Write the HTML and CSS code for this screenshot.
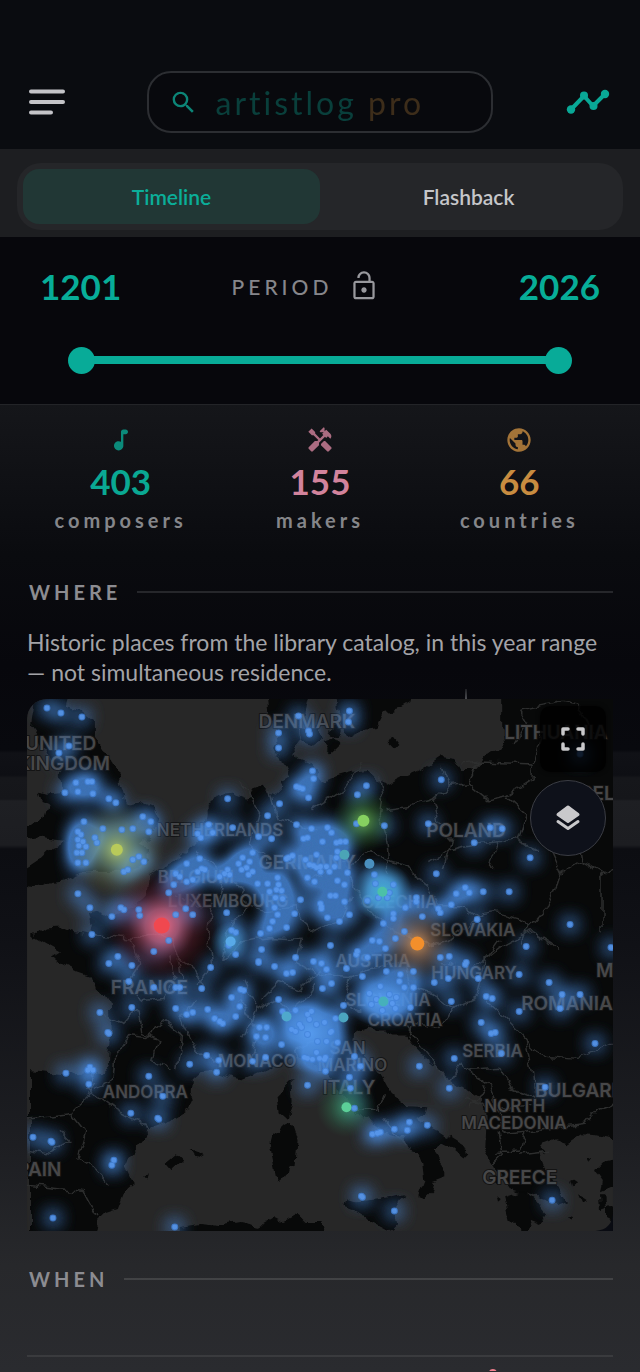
FILE: index.html
```html
<!doctype html>
<html lang="en">
    <head>
        <meta charset="utf-8">
        <meta name="viewport" content="width=device-width, initial-scale=1">
        <title>artistlog pro</title>
        <link rel="stylesheet" href="styles.css">
    </head>
    <body>
        <header class="topbar">
            <button class="icon_button" type="button" aria-label="Menu">
                <svg width="36" height="26" viewBox="0 0 36 26"><path d="M2 2.500h32M2 13h32M2 23.500h20" fill="none" stroke="currentColor" stroke-width="4" stroke-linecap="round"/></svg>
            </button>
            <label class="search">
                <svg width="29" height="29" viewBox="0 0 24 24" fill="currentColor"><path d="M15.500 14h-.79l-.28-.27A6.470 6.470 0 0 0 16 9.500 6.500 6.500 0 1 0 9.500 16c1.610 0 3.090-.59 4.230-1.570l.27.28v.79l5 4.990L20.490 19l-4.990-5zm-6 0C7.010 14 5 11.990 5 9.500S7.010 5 9.500 5 14 7.010 14 9.500 11.990 14 9.500 14z"/></svg>
                <input type="search" placeholder="artistlog pro" aria-label="Search">
            </label>
            <button class="icon_button trend" type="button" aria-label="Trends">
                <svg width="44" height="26" viewBox="0 0 44 26"><path d="M5 20.500L18 7l9 10L39 5" fill="none" stroke="currentColor" stroke-width="4" stroke-linejoin="round"/><g fill="currentColor"><circle cx="5" cy="20.500" r="4.200"/><circle cx="18" cy="6.500" r="4"/><circle cx="27.500" cy="17" r="4"/><circle cx="39" cy="5" r="4.200"/></g></svg>
            </button>
        </header>

        <nav class="tabs_bar">
            <div class="tabs">
                <button class="tab active" type="button">Timeline</button>
                <button class="tab" type="button">Flashback</button>
            </div>
        </nav>

        <section class="period">
            <div class="period_row">
                <output class="year">1201</output>
                <div class="period_label">
                    <span>PERIOD</span>
                    <button class="icon_button" type="button" aria-label="Lock period">
                        <svg width="32" height="32" viewBox="0 0 24 24" fill="currentColor"><path d="M12 17c1.100 0 2-.9 2-2s-.9-2-2-2-2 .9-2 2 .9 2 2 2zm6-9h-1V6c0-2.760-2.240-5-5-5S7 3.240 7 6h1.700c0-1.800 1.490-3.300 3.300-3.300s3.300 1.490 3.300 3.300v2H6c-1.100 0-2 .9-2 2v10c0 1.100.9 2 2 2h12c1.100 0 2-.9 2-2V10c0-1.100-.9-2-2-2zm.3 12.300H5.700V9.700h12.600z"/></svg>
                    </button>
                </div>
                <output class="year">2026</output>
            </div>
            <div class="range">
                <input class="track" type="range" min="1201" max="2026" value="1201" aria-label="From year">
                <input type="range" min="1201" max="2026" value="2026" aria-label="To year">
            </div>
        </section>

        <main>
            <div class="stats">
                <div class="stat composers">
                    <svg width="28" height="28" viewBox="0 0 24 24" fill="currentColor"><path d="M12 5v8.550c-.59-.34-1.270-.55-2-.55-2.210 0-4 1.790-4 4s1.790 4 4 4 4-1.790 4-4V7h2c1.100 0 2-.9 2-2s-.9-2-2-2h-2c-1.100 0-2 .9-2 2z"/></svg>
                    <strong>403</strong>
                    <span>composers</span>
                </div>
                <div class="stat makers">
                    <svg width="28" height="28" viewBox="0 0 24 24" fill="currentColor"><path d="M21.670 18.170l-5.300-5.300h-.99l-2.540 2.540v.99l5.300 5.300c.39.39 1.020.39 1.410 0l2.120-2.120c.39-.38.39-1.020 0-1.410z"/><path d="M17.340 10.190l1.410-1.410 2.120 2.120c1.170-1.170 1.170-3.070 0-4.240l-3.540-3.540-1.410 1.410V1.710L15.220 1l-3.540 3.540.71.71h2.830l-1.410 1.410 1.060 1.060-2.890 2.890-4.130-4.130V5.060L4.830 2.040 2 4.870 5.030 7.900h1.410l4.130 4.130-.85.85H7.600l-5.300 5.300c-.39.39-.39 1.020 0 1.410l2.120 2.120c.39.39 1.020.39 1.410 0l5.300-5.300v-2.120l5.150-5.150z"/></svg>
                    <strong>155</strong>
                    <span>makers</span>
                </div>
                <div class="stat countries">
                    <svg width="28" height="28" viewBox="0 0 24 24" fill="currentColor"><path d="M12 2C6.480 2 2 6.480 2 12s4.480 10 10 10 10-4.480 10-10S17.520 2 12 2zm-1 17.930c-3.950-.49-7-3.850-7-7.930 0-.62.08-1.210.21-1.790L9 15v1c0 1.100.9 2 2 2v1.930zm6.900-2.540c-.26-.81-1-1.390-1.900-1.390h-1v-3c0-.55-.45-1-1-1H8v-2h2c.55 0 1-.45 1-1V7h2c1.100 0 2-.9 2-2v-.41c2.930 1.190 5 4.060 5 7.410 0 2.080-.8 3.970-2.100 5.390z"/></svg>
                    <strong>66</strong>
                    <span>countries</span>
                </div>
            </div>

            <section class="block">
                <h2>WHERE</h2>
                <p>Historic places from the library catalog, in this year range — not simultaneous residence.</p>
                <div class="map">
                    <svg class="map_canvas" viewBox="27 699 587 533" role="img" aria-label="Map of historic places in Europe">
                        <defs>
                            <filter id="coast" filterUnits="userSpaceOnUse" x="17" y="689" width="607" height="553" color-interpolation-filters="sRGB">
                                <feTurbulence type="fractalNoise" baseFrequency=".08" numOctaves="2" seed="4"/>
                                <feDisplacementMap in="SourceGraphic" scale="11" xChannelSelector="R" yChannelSelector="G"/>
                            </filter>
                            <filter id="heat" filterUnits="userSpaceOnUse" x="17" y="689" width="607" height="553" color-interpolation-filters="sRGB">
                                <feGaussianBlur stdDeviation="9"/>
                                <feComponentTransfer><feFuncA type="linear" slope="4.400"/></feComponentTransfer>
                            </filter>
                            <radialGradient id="g_red"><stop offset="0" stop-color="#ff6f8c" stop-opacity=".95"/><stop offset=".3" stop-color="#c4607f" stop-opacity=".75"/><stop offset=".6" stop-color="#6a2434" stop-opacity=".45"/><stop offset="1" stop-color="#5a0d14" stop-opacity="0"/></radialGradient>
                            <radialGradient id="g_yellow"><stop offset="0" stop-color="#a9c77a" stop-opacity=".95"/><stop offset=".4" stop-color="#7c9c80" stop-opacity=".6"/><stop offset="1" stop-color="#5b5a30" stop-opacity="0"/></radialGradient>
                            <radialGradient id="g_lime"><stop offset="0" stop-color="#6db84c" stop-opacity=".8"/><stop offset=".5" stop-color="#3f7f35" stop-opacity=".4"/><stop offset="1" stop-color="#2d6030" stop-opacity="0"/></radialGradient>
                            <radialGradient id="g_orange"><stop offset="0" stop-color="#e8a468" stop-opacity=".85"/><stop offset=".4" stop-color="#a07a62" stop-opacity=".55"/><stop offset="1" stop-color="#5a4028" stop-opacity="0"/></radialGradient>
                            <radialGradient id="g_teal"><stop offset="0" stop-color="#44b2d0" stop-opacity=".95"/><stop offset=".5" stop-color="#4aa6dc" stop-opacity=".6"/><stop offset="1" stop-color="#3b86b8" stop-opacity="0"/></radialGradient>
                            <radialGradient id="g_green"><stop offset="0" stop-color="#3a9a6c" stop-opacity=".8"/><stop offset="1" stop-color="#286044" stop-opacity="0"/></radialGradient>
                            <radialGradient id="g_blue"><stop offset="0" stop-color="#5ba3fa" stop-opacity=".85"/><stop offset=".5" stop-color="#5299f0" stop-opacity=".55"/><stop offset="1" stop-color="#3a78c8" stop-opacity="0"/></radialGradient>
                            <!-- catalog places, one zero-length stroke each -->
                            <path id="places" d="M47 708h0M61 713h0M82 717h0M69 746h0M59 753h0M76 783h0M88 782h0M92 782h0M65 793h0M78 792h0M93 794h0M109 799h0M116 803h0M143 817h0M151 822h0M149 832h0M84 822h0M78 832h0M103 829h0M122 830h0M133 829h0M78 840h0M83 842h0M81 835h0M95 838h0M97 843h0M79 846h0M86 847h0M77 853h0M82 853h0M78 863h0M86 863h0M139 857h0M144 862h0M133 860h0M124 872h0M128 870h0M78 894h0M90 908h0M112 917h0M121 908h0M124 910h0M139 910h0M140 916h0M92 935h0M109 964h0M118 957h0M132 966h0M154 952h0M169 941h0M169 893h0M176 915h0M186 909h0M193 915h0
                                M187 864h0M200 859h0M202 869h0M176 874h0M180 877h0M187 882h0M198 872h0M205 870h0M193 880h0M174 885h0M228 799h0M209 825h0M213 833h0M198 834h0M201 838h0M233 828h0M259 837h0M272 839h0M268 816h0M280 804h0M309 798h0M297 787h0M303 789h0M300 788h0M313 771h0M314 779h0M299 716h0M279 733h0M279 748h0M309 731h0M310 734h0M297 825h0M312 829h0M304 839h0M308 838h0M253 853h0M243 858h0M250 862h0M247 868h0M253 872h0M242 870h0M239 864h0M249 875h0M225 874h0M230 875h0M220 877h0M228 870h0M258 884h0M287 859h0M293 856h0M289 858h0M301 900h0M295 914h0M287 928h0M261 934h0M227 913h0M232 931h0M236 933h0M236 955h0M229 946h0M262 950h0M296 958h0M259 962h0M275 967h0M211 968h0
                                M278 878h0M270 892h0M277 890h0M282 891h0M276 898h0M275 908h0M278 915h0M273 922h0M270 929h0M283 899h0M268 884h0M279 885h0M350 711h0M349 722h0M442 780h0M367 786h0M358 795h0M385 826h0M357 824h0M429 824h0M491 828h0M503 829h0M475 843h0M531 858h0M437 874h0M466 888h0M470 893h0M457 894h0M484 892h0M510 892h0M452 905h0M439 909h0M441 913h0M417 898h0M417 902h0M406 908h0M423 917h0M394 914h0M394 919h0M384 924h0M478 920h0M571 925h0M527 947h0M612 948h0M581 754h0M328 828h0M332 833h0M323 842h0M337 843h0M341 842h0M346 842h0M348 873h0M345 885h0M338 881h0M345 902h0M331 896h0M336 896h0M322 907h0M328 918h0M340 922h0M350 915h0M368 901h0M331 946h0M358 952h0M357 955h0M368 958h0M373 941h0M380 942h0M386 949h0M396 939h0M405 932h0M441 958h0M450 957h0M467 963h0M466 965h0
                                M317 855h0M310 865h0M317 868h0M314 866h0M321 867h0M327 867h0M335 867h0M308 878h0M315 882h0M306 860h0M338 852h0M337 858h0M321 872h0M330 872h0M321 904h0M322 909h0M376 884h0M379 898h0M390 893h0M394 885h0M375 875h0M388 898h0M129 982h0M154 988h0M176 988h0M180 988h0M202 989h0M132 1008h0M100 1013h0M109 1034h0M108 1033h0M176 1009h0M187 1015h0M193 1013h0M208 1010h0M215 1019h0M220 1022h0M223 1024h0M232 998h0M241 990h0M244 991h0M240 1007h0M236 1017h0M259 963h0M287 974h0M293 973h0M279 1000h0M314 962h0M282 1045h0M257 1037h0M260 1028h0M266 1038h0M267 1028h0M266 1058h0M253 1062h0M207 1056h0M190 1065h0M219 1061h0M217 1073h0M149 1077h0M89 1085h0M66 1074h0M90 1068h0M93 1071h0M88 1071h0M163 1097h0M131 1114h0M159 1120h0M158 1119h0M33 1138h0M52 1143h0M51 1142h0M114 1161h0M112 1166h0M53 1219h0M175 1228h0M308 1086h0
                                M283 1012h0M296 1011h0M308 1015h0M312 1012h0M300 1025h0M292 1030h0M296 1032h0M317 1025h0M325 1023h0M331 1033h0M308 1035h0M302 1028h0M310 1020h0M318 1042h0M327 1042h0M338 1043h0M317 1053h0M308 1059h0M313 1060h0M320 1059h0M326 1058h0M305 1058h0M336 1019h0M344 1006h0M323 989h0M332 984h0M347 969h0M363 977h0M327 970h0M322 964h0M314 962h0M296 958h0M387 972h0M401 975h0M414 972h0M381 987h0M400 982h0M405 988h0M414 988h0M411 1008h0M396 1009h0M397 998h0M377 1000h0M372 1005h0M383 1011h0M390 995h0M370 994h0M393 1004h0M355 1057h0M361 1067h0M420 1067h0M435 983h0M449 979h0M452 1002h0M479 979h0M487 997h0M493 999h0M520 975h0M550 983h0M563 995h0M581 995h0M561 1009h0M520 1012h0M596 1044h0M482 1023h0M492 1034h0M496 1033h0M455 1059h0M502 1054h0M450 1089h0M546 1088h0M350 1078h0M351 1089h0M355 1109h0M410 1123h0M428 1126h0M408 1131h0M395 1130h0M381 1133h0M378 1134h0M373 1135h0M363 1198h0M362 1197h0M395 1212h0M553 1201h0M326 1072h0M332 1032h0M325 1060h0"/>
                        </defs>
                        <rect class="sea" x="27" y="699" width="587" height="533"/>
                        <g filter="url(#coast)">
                            <g class="land">
                                <!-- great britain -->
                                <path d="M36 690l34 5-3 12 14 5 12 10 0 15 8 9 8 12 9 12 2 12 4 14 2 9 12-2 14 6 5 11-6 16-10 9 8 4 1 11-10 8-16 4-27 0-15 1-8 3-10 5-12 1-9 4-10-3-8 6 0-20 18-12 8-8 10-2 6-6-14-1-10-2-14 2 0-14 17-12 3-10-9-4-2-7 10 2 15-2 0-14-8-9-6-14-6-12-12-18z"/>
                                <!-- mainland -->
                                <path d="M33 937l12-8 17-1 13 5 15 2 2-10-3-12 8-2 12 6 12-5 14-7 12-11 2-19 12-7 15-8 15-11 10-12 6-22 0-12 9-4 7-4 10-1 16 6 4-11 10-4 6 7 7 3 5-5-2-8 12-4-6-13-4-10-8-3 6-12-2-15-6-10-2-25h42l-6 28-6 8 2 15-8 10 4 7 16 6 6 10 6 8 14-6 14-4 14-2 10 10 12 4 12-6 20-9 20-13 14 2 7 12 15 0 10-14 14-5 4-8-2-17 0-34h121v450l-26-6-15-1-15 10-12-4-13 5 5 9-8-2 4 15 9 11 8 14 7 10-10 5-10-7-14-5-22-6-8-12-10-13-8-15 1-20-1-18-4-12-12-8-10-6-18-14-18-14-12-13-8-10-10 0-10-5-8 0-8-4-12 4-1 13 6 12 14 10 10 15 8 15 15 12 19 1-2 7-7 5 20 10 15 10 16 10 1 6-7 0-10-8-10-5-10 9 12 16 0 10-10 4-2 10-8 8-6-2 6-16-2-17-5-13-11-4-4-10-18-5-10-8-12-7-12-13-12-15-12-12-6-10-13-10-11-1-17 8-22 9-15 6-15-3-15-5-12 1-10 9-1 12 3 8-4 8-16 10-20 7-12 15-12 15-4 10 6 13 3 5-11 9-6 16-12 4-8 8-4 22h-63v-172l33 3 25-2 15 2 6-10 2-30-1-30-4-7-11-8-4-13-12-4-16-8-10-7 8-5z"/>
                                <!-- sweden and the danish islands -->
                                <path d="M338 690h76l-3 12-12 7-14 3-8 16-14 2-14 7-8-14-4-16zM300 730l16-3 6 12-10 7-10-4zM322 742l12-4 6 8-8 7zM334 722l9 6-4 12-8-6zM388 741l4-6 6 8-4 4z"/>
                                <!-- mediterranean islands -->
                                <path d="M292 1080l1 25-5 15-9-8-2-16 8-8zM284 1126l8-4 6 18-2 25-7 3-2 8-10 4-4-20-3-18 2-8 7 2zM348 1200l12 2 20-2 24-6-9 16 3 15-7 7-15-8-20-12-10-4zM166 1163l10-8 7 7-10 9zM190 1151l8 3 3 5-8-3zM142 1179l7-5-1 6z"/>
                                <path d="M180 1228l20-3 18 2 22-4 20 4 14-8 10 5 14-8 8 8 16 0 6 20H180z"/>
                                <!-- peloponnese, aegean -->
                                <path d="M506 1198l18-6 12 8 12 15-7 11-10-4-7 14-12-14zM494 1176l6 3-2 6zM497 1196l6 5-4 3zM572 1180l6 4-4 3zM580 1196l8 5-5 2zM596 1170l8-8 12-3v28l-14 6 2-12zM600 1196l5 0 2 14-6 2zM588 1158l6 2-3 4zM608 1206l8-3v20l-8-4zM570 1216l6 1-2 4z"/>
                            </g>
                            <g class="border">
                                <path d="M379 776l4 22-2 20 6 18 2 22 0 16M389 860l-18-8-14 8-8 14 16 30 16 18 22 14M389 860l20 6 8 12 12 10 12 18 22 0 16 12M403 936l18 4 10 8 18-6 16-14 18-14 14-2 24 6 10 8M440 962l14 2 16 10 10-10 20-16 22-12 10-4 20 12 8 8M536 922l-10 10-4 10M536 922l12-14 10-22 4-12-14-30 6-20 18 10 28 4M462 764l18-2 54 2M534 764l8-30M480 762l-12 22-18 2-6-18M468 784l20 16 20-4 26-16 0-16M450 786l-16 14-20 6-28 4M434 800l8 30 10 12-8 26M508 798l20 18-8 24-20 2-24 2M500 842l-10 26M520 840l20 12M476 844l-26 6-20 14M562 874l20-12 20 12 12-6M582 862l-4-26M603 874v60"/>
                                <path d="M196 852l16 10 12 14-6 24-14 8-30-14M224 876l18 12 4 18 20 6 30-4 14 26M212 906l-4 26 4 34-16 20M310 934l30-12 12-26M246 906l-18 26-6 30M222 962l20-20 30-4 30 2M302 940l-6 22 26 14 30 2 20-10 34-6M262 1000l18-18 20 8 20-20M244 1040l14-30-14-30M258 1010l20-10 14 12 16-14 10-16M352 978l-10 24 20 10M406 962l4 26-14 18M410 988l22 6 22 16 24-12M454 1010l-12 18-28-4-6 20M408 1028l14 20 28 34M478 998l8-38 14-20M486 1000l22 20 18 18 12 18 40 4 36-16M526 1040l8 36 2 22M536 1098l-24-10-12-20-30 2M450 1082l12-18 8 8 20 14 10 24 36-2M468 1100l32 12 4 22 22-2M526 1132l60-8 12-14 16-6M500 1134l4 20-12 12M526 1132l-6 20-20 0M520 1156l30-4M486 1086l-14 24"/>
                                <path d="M92 935l44 4 20-6 16 6 6 18 18 16 12 20M130 939l10 26-14 22 18 14 20-2 10-22-4-20M100 1014l24 10 14-16 4 26 16 6-6 20 20 10M116 1054l12-18 18 2 20-18 16 14-4 34M196 1000l-14 20 14 30 20 12M116 1054l-2 28-20 8M96 1072l-8 18 26 20 38 20M27 1120l44-6 14-14 10-16M71 1114l14 18-8 26 20 12M97 1170l14 14M27 1186l56 6 14 26M60 1132l10 10-22 12-20-4M240 1000l18 30-6 32M178 960l4 20M240 780l20 34-10 30 20 20M312 810l30-20 20-28M310 880l40-20M270 790l8 30 40 10M316 1040l-20 10 6 20M350 1110l30 0 6-16M385 1120l20 26M520 710l8 14-12 20M520 710l40-8 20 4 16 30"/>
                            </g>
                        </g>
                        <path class="corner" d="M614 1212v20h-20q20 0 20-20z"/>

                        <g class="label">
                            <text x="259" y="728">DENMARK</text>
                            <text x="25" y="750">UNITED</text>
                            <text x="17" y="770">KINGDOM</text>
                            <text x="505" y="739">LITHUANIA</text>
                            <text x="581" y="800">BELARUS</text>
                            <text x="427" y="837">POLAND</text>
                            <text x="259" y="869">GERMANY</text>
                            <text x="111" y="995">FRANCE</text>
                            <text x="597" y="977">MOLDOVA</text>
                            <text x="522" y="1011">ROMANIA</text>
                            <text x="323" y="1095">ITALY</text>
                            <text x="536" y="1098">BULGARIA</text>
                            <text x="5" y="1177">SPAIN</text>
                            <text x="483" y="1185">GREECE</text>
                        </g>
                        <g class="label small">
                            <text x="157" y="836">NETHERLANDS</text>
                            <text x="158" y="883">BELGIUM</text>
                            <text x="168" y="907">LUXEMBOURG</text>
                            <text x="362" y="908">CZECHIA</text>
                            <text x="431" y="936">SLOVAKIA</text>
                            <text x="336" y="967">AUSTRIA</text>
                            <text x="432" y="979">HUNGARY</text>
                            <text x="346" y="1007">SLOVENIA</text>
                            <text x="368" y="1027">CROATIA</text>
                            <text x="330" y="1055">SAN</text>
                            <text x="318" y="1072">MARINO</text>
                            <text x="463" y="1058">SERBIA</text>
                            <text x="218" y="1068">MONACO</text>
                            <text x="103" y="1099">ANDORRA</text>
                            <text x="485" y="1113">NORTH</text>
                            <text x="462" y="1130">MACEDONIA</text>
                        </g>

                        <use href="#places" class="heat" filter="url(#heat)"/>
                        <circle cx="117" cy="850" r="48" fill="url(#g_yellow)"/>
                        <circle cx="162" cy="926" r="56" fill="url(#g_red)"/>
                        <circle cx="364" cy="821" r="32" fill="url(#g_lime)"/>
                        <circle cx="383" cy="892" r="30" fill="url(#g_teal)"/>
                        <ellipse cx="383" cy="1001" rx="38" ry="26" fill="url(#g_blue)"/>
                        <circle cx="310" cy="1034" r="40" fill="url(#g_blue)"/>
                        <circle cx="418" cy="944" r="38" fill="url(#g_orange)"/>
                        <circle cx="347" cy="1108" r="30" fill="url(#g_green)"/>
                        <circle cx="231" cy="942" r="20" fill="url(#g_teal)" opacity=".5"/>
                        <use href="#places" class="dot_ring"/>
                        <use href="#places" class="dot"/>
                        <g>
                            <circle cx="231" cy="942" r="5" fill="#58a9e8"/>
                            <circle cx="370" cy="864" r="5" fill="#4a90c0"/>
                            <circle cx="345" cy="855" r="5" fill="#4ba5b6"/>
                            <circle cx="344" cy="1018" r="5" fill="#4ba5c0"/>
                            <circle cx="287" cy="1017" r="5" fill="#4fa9cc"/>
                            <circle cx="383" cy="892" r="5" fill="#4cc0a8"/>
                            <circle cx="384" cy="1002" r="5" fill="#46b0bb"/>
                            <circle cx="347" cy="1108" r="5" fill="#5ccf98"/>
                            <circle cx="364" cy="821" r="6" fill="#86d060"/>
                            <circle cx="117" cy="850" r="6" fill="#b8ca5a"/>
                            <circle cx="418" cy="944" r="7" fill="#f38f2b"/>
                            <circle cx="162" cy="926" r="8" fill="#f0484f"/>
                        </g>
                    </svg>
                    <div class="map_controls">
                        <button class="fullscreen" type="button" aria-label="Full screen">
                            <svg width="26" height="26" viewBox="0 0 26 26" fill="none" stroke="currentColor" stroke-width="3.500" stroke-linecap="round" stroke-linejoin="round"><path d="M3 8V3h5M18 3h5v5M23 18v5h-5M8 23H3v-5"/></svg>
                        </button>
                        <button class="layers" type="button" aria-label="Map layers">
                            <svg width="26" height="28" viewBox="0 0 26 28"><path d="M13 3l10 7.500L13 17.500 3 10.500z" fill="currentColor" stroke="currentColor" stroke-width="3" stroke-linejoin="round"/><path d="M3 17.500l10 7 10-7" fill="none" stroke="currentColor" stroke-width="3" stroke-linecap="round" stroke-linejoin="round"/></svg>
                        </button>
                    </div>
                </div>
            </section>

            <section class="block when">
                <h2>WHEN</h2>
                <div class="chart">
                    <svg width="100%" height="24"><circle cx="79.500%" cy="16" r="4" fill="#f0808f"/></svg>
                </div>
            </section>
        </main>
    </body>
</html>
```
FILE: styles.css
```css
* {
    box-sizing: border-box;
}
body {
    margin: 0;
    min-height: 100vh;
    display: flex;
    flex-direction: column;
    background-color: #0a0c10;
    color: #a3a3a7;
    font-family: Lato, "Open Sans", sans-serif;
}
button {
    border: 0;
    padding: 0;
    background: none;
    color: inherit;
    font: inherit;
    cursor: pointer;
}
svg {
    display: block;
}

/* top bar */
.topbar {
    display: grid;
    grid-template-columns: 1fr minmax(0, 346px) 1fr;
    align-items: center;
    padding: 71px 30px 16px 29px;
    background-color: #0a0c10;
}
.icon_button {
    justify-self: start;
    color: #c4c4c8;
}
.trend {
    justify-self: end;
    color: #09a896;
}
.search {
    display: flex;
    align-items: center;
    gap: 18px;
    height: 62px;
    padding: 0 20px;
    border: 2px solid #2c2e32;
    border-radius: 24px;
    background-color: #08090d;
    color: #0c8577;
}
.search svg {
    flex: none;
}
.search input {
    flex: 1;
    min-width: 0;
    padding: 0;
    border: 0;
    outline: 0;
    background: none;
    color: #0a7d70;
    font: 400 32px Lato, "Open Sans", sans-serif;
    letter-spacing: 3px;
}
.search input::placeholder {
    background: linear-gradient(90deg, #093f3b 150px, #3d2d1a 150px);
    -webkit-background-clip: text;
    background-clip: text;
    color: transparent;
    opacity: 1;
}

/* tabs */
.tabs_bar {
    padding: 14px 17px 7px;
    background-color: #1d1e21;
}
.tabs {
    display: flex;
    padding: 6px;
    border-radius: 24px;
    background-color: #252629;
}
.tab {
    flex: 1;
    height: 55px;
    border-radius: 16px;
    color: #c6c6c9;
    font-size: 21px;
    font-weight: 600;
}
.tab.active {
    background-color: #213735;
    color: #0bae99;
}

/* period */
.period {
    height: 168px;
    padding: 22px 40px 0;
    border-bottom: 1px solid #232428;
    background-color: #07070c;
}
.period_row {
    display: grid;
    grid-template-columns: 1fr auto 1fr;
    align-items: center;
    height: 54px;
}
.year {
    color: #07ad98;
    font-size: 35px;
    font-weight: 700;
}
.year:last-child {
    text-align: right;
}
.period_label {
    display: flex;
    align-items: center;
    font-size: 21px;
    font-weight: 500;
    letter-spacing: 4px;
    color: #86868b;
}
.period_label .icon_button {
    padding: 0 28px 0 16px;
    color: #98989d;
}
.range {
    display: grid;
    margin: 33px 28px 0;
}
.range input {
    grid-area: 1 / 1;
    -webkit-appearance: none;
    appearance: none;
    width: 100%;
    height: 28px;
    margin: 0;
    background: none;
    pointer-events: none;
}
.range .track {
    background: linear-gradient(#08ab98, #08ab98) center / calc(100% - 26px) 8px no-repeat;
}
.range input::-webkit-slider-thumb {
    -webkit-appearance: none;
    width: 27px;
    height: 27px;
    border-radius: 50%;
    background-color: #08ab98;
    pointer-events: auto;
}

/* page body, over a dim night skyline */
main {
    flex: 1;
    display: flex;
    flex-direction: column;
    background:
        linear-gradient(#1d1e22, #54555a) 465px 284px / 2px 12px no-repeat,
        linear-gradient(#15161a 0, #0a0b0f 150px, #07070c 260px, #08090e 345px,
            #101116 348px, #0e0f14 370px, #16171b 373px, #15161a 394px, #1e1f23 396px,
            #1c1d21 440px, #0c0d12 444px, #101116 540px, #1d1e22 740px, #27282b 860px, #2a2b2f 967px);
}
.stats {
    display: grid;
    grid-template-columns: repeat(3, 1fr);
    padding: 21px 21px 0;
    text-align: center;
}
.stat {
    display: flex;
    flex-direction: column;
    align-items: center;
}
.stat strong {
    margin-top: 6px;
    font-size: 35px;
    line-height: 42px;
}
.stat span {
    margin-top: 6px;
    color: #85868a;
    font-size: 20px;
    font-weight: 700;
    letter-spacing: 4px;
    line-height: 24px;
}
.stat svg {
    opacity: .8;
}
.composers {
    color: #0aa893;
}
.makers {
    color: #d2839c;
}
.countries {
    color: #c88c40;
}

.block {
    padding: 44px 27px 0;
}
.block h2 {
    display: flex;
    align-items: center;
    gap: 16px;
    margin: 0;
    padding-left: 2px;
    color: #8c8c91;
    font-size: 20px;
    font-weight: 700;
    letter-spacing: 4px;
    line-height: 32px;
}
.block h2::after {
    content: "";
    flex: 1;
    height: 2px;
    background-color: rgba(255, 255, 255, .12);
}
.block p {
    margin: 19px 0 12px;
    font-size: 23px;
    font-weight: 400;
    line-height: 30px;
}

/* map */
.map {
    position: relative;
    overflow: hidden;
    border-top-left-radius: 20px;
}
.map_canvas {
    width: 100%;
    height: auto;
}
.sea {
    fill: #272727;
}
.land {
    fill: #080909;
}
.border {
    fill: none;
    stroke: #2d2e2e;
    stroke-width: 1.5;
    stroke-linejoin: round;
}
.corner {
    fill: #090b12;
}
.label {
    fill: #474748;
    stroke: #141414;
    stroke-width: 2;
    stroke-linejoin: round;
    paint-order: stroke;
    font: 600 19px Inter, sans-serif;
}
.label.small {
    font-size: 17px;
}
.heat {
    fill: none;
    stroke: #4d92ea;
    stroke-width: 8;
    stroke-linecap: round;
    opacity: .76;
}
.dot_ring {
    fill: none;
    stroke: #4383da;
    stroke-width: 7;
    stroke-linecap: round;
    opacity: .8;
}
.dot {
    fill: none;
    stroke: #6aaaff;
    stroke-width: 5;
    stroke-linecap: round;
    opacity: .5;
}
.map_controls {
    position: absolute;
    top: 7px;
    right: 7px;
    display: flex;
    flex-direction: column;
    align-items: flex-end;
    gap: 8px;
    color: #c9c9cb;
}
.map_controls button {
    display: grid;
    place-items: center;
}
.fullscreen {
    width: 66px;
    height: 66px;
    border-radius: 10px;
    background-color: rgba(0, 0, 0, .8);
    box-shadow: 0 0 4px rgba(0, 0, 0, .6);
}
.map_controls .layers {
    width: 76px;
    height: 76px;
    border: 1px solid #3b3d44;
    border-radius: 50%;
    background-color: #0e111a;
}

/* when */
.when {
    flex: 1;
    padding-top: 32px;
}
.chart {
    height: 16px;
    margin-top: 60px;
    border-top: 2px solid #3a3b3e;
    overflow: hidden;
}
```
